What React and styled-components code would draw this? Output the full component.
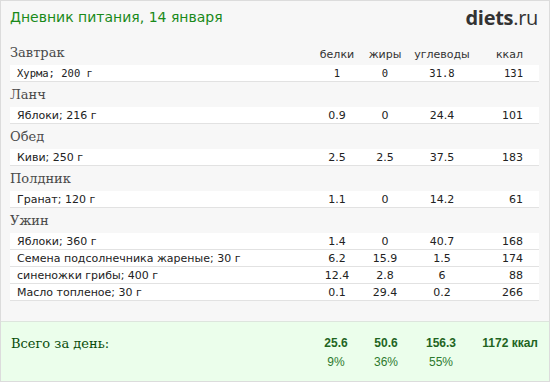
import React from "react";
import styled, { createGlobalStyle } from "styled-components";

const meals = [
  { title: "Завтрак", items: [["Хурма; 200 г", "1", "0", "31.8", "131"]], mono: true },
  { title: "Ланч", items: [["Яблоки; 216 г", "0.9", "0", "24.4", "101"]] },
  { title: "Обед", items: [["Киви; 250 г", "2.5", "2.5", "37.5", "183"]] },
  { title: "Полдник", items: [["Гранат; 120 г", "1.1", "0", "14.2", "61"]] },
  {
    title: "Ужин",
    items: [
      ["Яблоки; 360 г", "1.4", "0", "40.7", "168"],
      ["Семена подсолнечника жареные; 30 г", "6.2", "15.9", "1.5", "174"],
      ["синеножки грибы; 400 г", "12.4", "2.8", "6", "88"],
      ["Масло топленое; 30 г", "0.1", "29.4", "0.2", "266"],
    ],
  },
];

const GlobalStyle = createGlobalStyle`
  html, body {
    margin: 0;
    padding: 0;
    background: #fff;
  }
  * {
    box-sizing: border-box;
  }
`;

const Frame = styled.div`
  width: 550px;
  height: 382px;
  border: 1px solid #dcdcdc;
  background: #f7f7f7;
  display: flex;
  flex-direction: column;
`;

const Header = styled.div`
  display: flex;
  justify-content: space-between;
  align-items: center;
  height: 32px;
  padding: 0 11px 0 9px;
  margin-bottom: 7px;
`;

const Title = styled.h1`
  margin: 0;
  font-family: "DejaVu Sans", sans-serif;
  font-weight: normal;
  font-size: 14px;
  color: #1a8a1a;
`;

const Logo = styled.div`
  font-family: "Open Sans", sans-serif;
  font-size: 20px;
  color: #333;
  letter-spacing: -0.3px;
  b {
    font-weight: 700;
  }
`;

const Meals = styled.div`
  padding: 0 10px 0 9px;
`;

const grid = `
  display: grid;
  grid-template-columns: 1fr 50px 46px 68px 63px;
`;

const MealHead = styled.div`
  ${grid}
  height: 25px;
  align-items: end;
  padding-bottom: 3px;
  font-family: "DejaVu Sans", sans-serif;
  font-size: 11px;
  color: #333;
`;

const MealTitle = styled.span`
  font-family: "DejaVu Serif", serif;
  font-size: 13px;
  color: #4a4a4a;
  line-height: 18px;
`;

const ColLabel = styled.span`
  text-align: ${(p) => (p.$right ? "right" : "center")};
  padding-right: ${(p) => (p.$right ? "16px" : "0")};
  line-height: 14px;
`;

const Row = styled.div`
  ${grid}
  height: 17px;
  align-items: center;
  background: #fff;
  border-bottom: 1px solid #e2e2e2;
  font-family: ${(p) => (p.$mono ? '"DejaVu Sans Mono", monospace' : '"DejaVu Sans", sans-serif')};
  font-size: ${(p) => (p.$mono ? "10.5px" : "11px")};
  color: #222;
`;

const Name = styled.span`
  padding-left: 7px;
`;

const Cell = styled.span`
  text-align: ${(p) => (p.$right ? "right" : "center")};
  padding-right: ${(p) => (p.$right ? "16px" : "0")};
`;

const Totals = styled.div`
  margin-top: auto;
  height: 60px;
  background: #ebfeeb;
  border-top: 1px solid #dde5dd;
  padding: 13px 11px 0 10px;
  display: grid;
  grid-template-columns: 1fr 52px 48px 62px 66px;
  grid-template-rows: 16px 16px;
  row-gap: 3px;
  align-items: center;
`;

const TotalLabel = styled.span`
  font-family: "DejaVu Serif", serif;
  font-size: 13px;
  color: #0a4d0a;
`;

const TotalNum = styled.span`
  font-family: "Liberation Sans", Arial, sans-serif;
  font-weight: bold;
  font-size: 12px;
  color: #1f651f;
  text-align: ${(p) => (p.$right ? "right" : "center")};
`;

const Pct = styled.span`
  grid-row: 2;
  grid-column: ${(p) => p.$col};
  font-family: "Liberation Sans", Arial, sans-serif;
  font-size: 12px;
  color: #2e7a2e;
  text-align: center;
`;

export default function App() {
  return (
    <>
      <GlobalStyle />
      <Frame>
        <Header>
          <Title>Дневник питания, 14 января</Title>
          <Logo>
            <b>diets</b>.ru
          </Logo>
        </Header>
        <Meals>
          {meals.map((meal, i) => (
            <div key={meal.title}>
              <MealHead>
                <MealTitle>{meal.title}</MealTitle>
                {i === 0 && (
                  <>
                    <ColLabel>белки</ColLabel>
                    <ColLabel>жиры</ColLabel>
                    <ColLabel>углеводы</ColLabel>
                    <ColLabel $right>ккал</ColLabel>
                  </>
                )}
              </MealHead>
              {meal.items.map((item) => (
                <Row key={item[0]} $mono={meal.mono}>
                  <Name>{item[0]}</Name>
                  <Cell>{item[1]}</Cell>
                  <Cell>{item[2]}</Cell>
                  <Cell>{item[3]}</Cell>
                  <Cell $right>{item[4]}</Cell>
                </Row>
              ))}
            </div>
          ))}
        </Meals>
        <Totals>
          <TotalLabel>Всего за день:</TotalLabel>
          <TotalNum>25.6</TotalNum>
          <TotalNum>50.6</TotalNum>
          <TotalNum>156.3</TotalNum>
          <TotalNum $right>1172 ккал</TotalNum>
          <Pct $col={2}>9%</Pct>
          <Pct $col={3}>36%</Pct>
          <Pct $col={4}>55%</Pct>
        </Totals>
      </Frame>
    </>
  );
}
